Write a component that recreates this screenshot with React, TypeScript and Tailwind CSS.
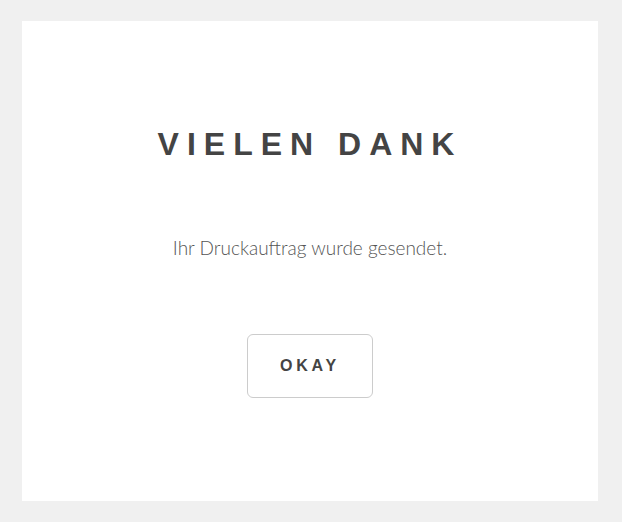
export default function App() {
  return (
    <div className="min-h-[522px] w-[622px] bg-[#f0f0f0] pt-[21px] pb-[21px] pl-[22px] pr-[24px]">
      <div className="flex h-[480px] flex-col items-center bg-white">
        <h1 className="mt-[104px] font-['Liberation_Sans',Arial,sans-serif] text-[32px] font-bold leading-[38px] tracking-[0.25em] text-[#444444]">
          VIELEN DANK
        </h1>
        <p className="mt-[73px] font-['Lato','Open_Sans',sans-serif] text-[19px] font-light leading-[24px] text-[#555555]">
          Ihr Druckauftrag wurde gesendet.
        </p>
        <button className="mt-[74px] flex h-[64px] w-[126px] items-center justify-center rounded-[6px] border border-[#cccccc] bg-white font-['Liberation_Sans',Arial,sans-serif] text-[16px] font-bold tracking-[0.24em] text-[#444444]">
          OKAY
        </button>
      </div>
    </div>
  );
}
